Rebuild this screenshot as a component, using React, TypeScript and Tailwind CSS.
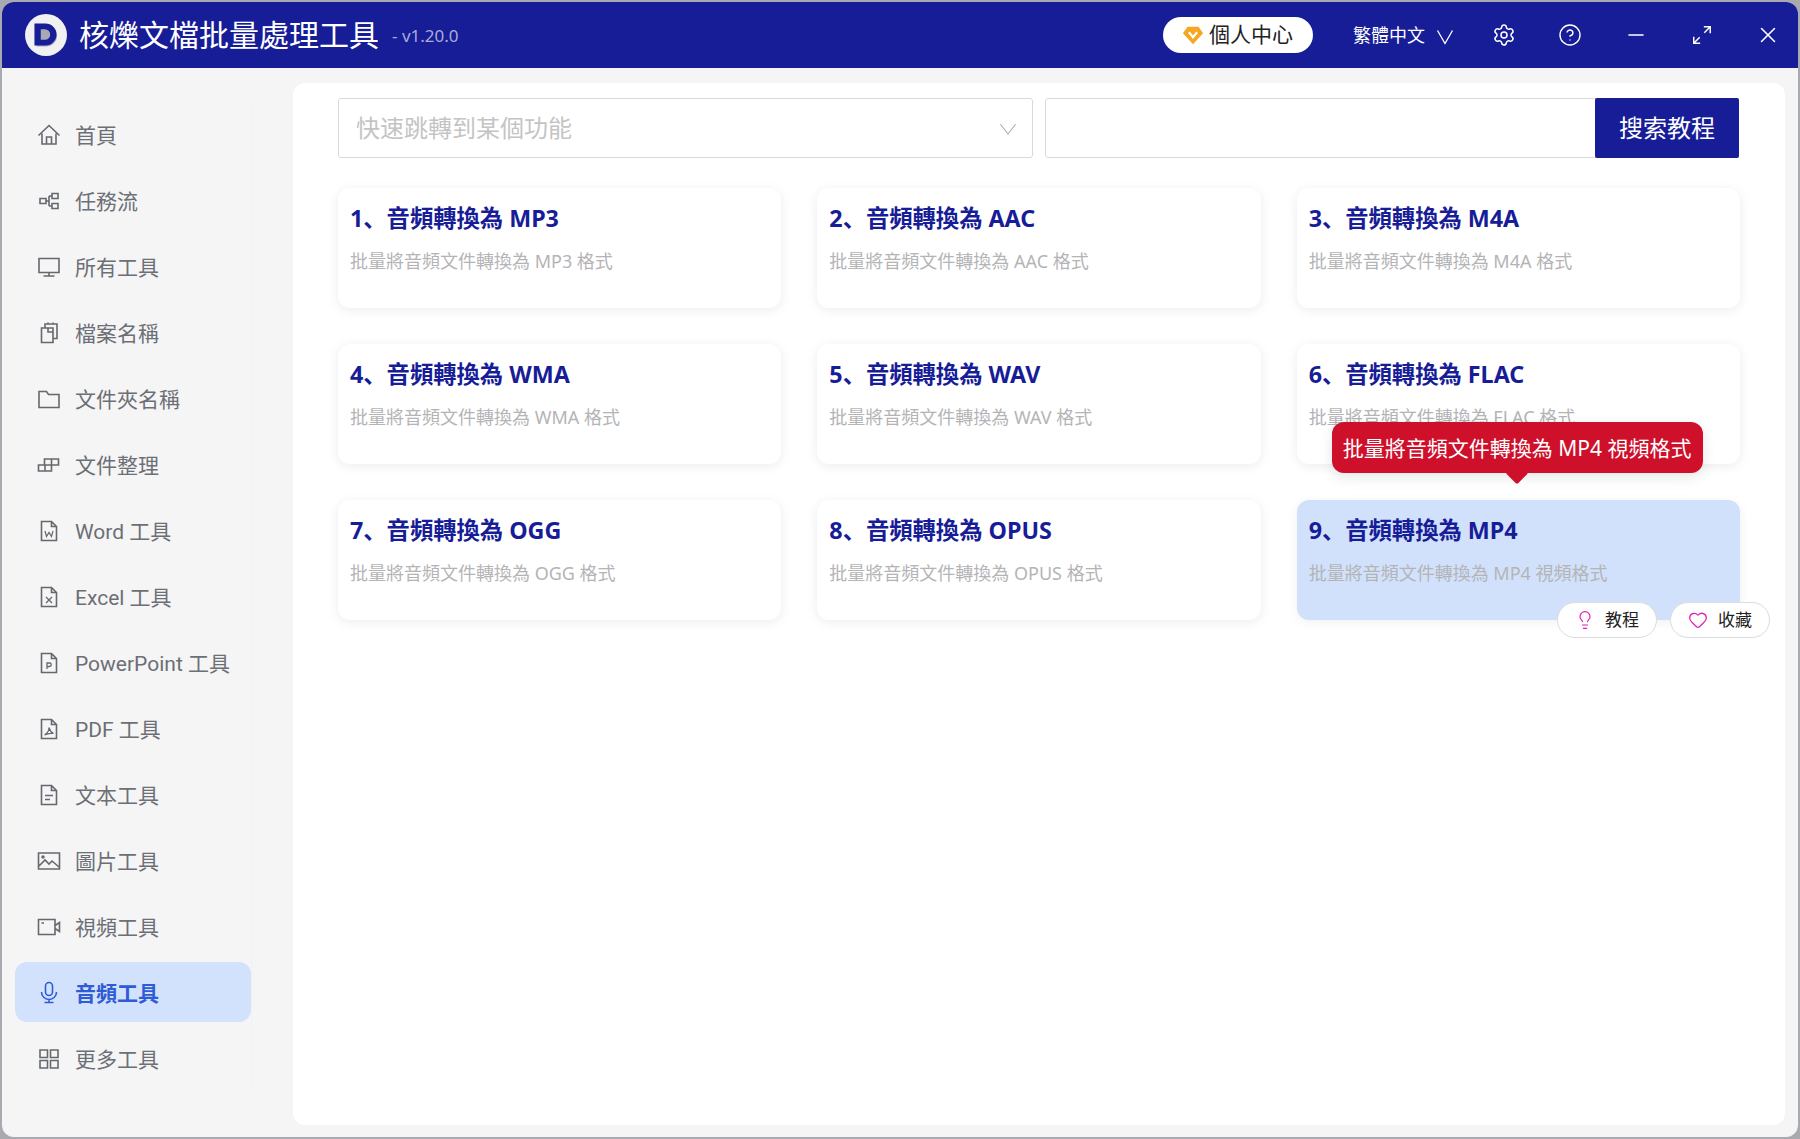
import { CircleHelp, Heart, Lightbulb, Minus, Settings, X } from "lucide-react";
import type { ReactNode } from "react";

function Svg({ children, className = "h-[24px] w-[24px]" }: { children: ReactNode; className?: string }) {
  return (
    <svg viewBox="0 0 24 24" fill="none" stroke="currentColor" strokeWidth="1.6" className={className}>
      {children}
    </svg>
  );
}

const fileOutline = <path d="M4.500 2.500h10l5 5v14h-15z M14.500 2.500v5h5" />;

const navItems: { label: string; icon: ReactNode; active?: boolean }[] = [
  { label: "首頁", icon: <Svg><path d="M1.500 12.500 12 2.500l10.500 10M5 10.500V21h14V10.500M9.500 21v-7h5v7" /></Svg> },
  { label: "任務流", icon: <Svg><path d="M3 9.500h6v5H3zM15 4.500h6v5h-6zM15 14.500h6v5h-6zM9 12h3M12 7h3M12 17h3M12 7v10" /></Svg> },
  { label: "所有工具", icon: <Svg><path d="M2 3.500h20v14H2zM12 17.500v3.500M6.500 21h11" /></Svg> },
  { label: "檔案名稱", icon: <Svg><path d="M4.500 7h11.500v14.500H4.500zM8 7V3h12v14.500h-4M11 1.500V3M16 1.500V3M11 7v4h5" /></Svg> },
  { label: "文件夾名稱", icon: <Svg><path d="M2 4.500h7.500l2 3H22v13H2z" /></Svg> },
  { label: "文件整理", icon: <Svg><path d="M1.500 12h13v6h-13zM7.500 12V6h14v6h-7M8 12v6M14.500 6v6" /></Svg> },
  { label: "Word 工具", icon: <Svg>{fileOutline}<path d="m8 12 1.500 5.500 2.500-4 2.500 4L16 12" strokeWidth="1.200" /></Svg> },
  { label: "Excel 工具", icon: <Svg>{fileOutline}<path d="m9 12 6 6M15 12l-6 6" strokeWidth="1.300" /></Svg> },
  { label: "PowerPoint 工具", icon: <Svg>{fileOutline}<path d="M10 18v-6h2.500a1.700 1.700 0 0 1 0 3.500H10" strokeWidth="1.300" /></Svg> },
  { label: "PDF 工具", icon: <Svg>{fileOutline}<path d="M12 10.500c0 3-2 6-4.500 7.500 3-1.500 6-2 9-1.500-2-1-3.700-3-4.500-6" strokeWidth="1.200" /></Svg> },
  { label: "文本工具", icon: <Svg>{fileOutline}<path d="M8 12.500h8M8 16.500h5" /></Svg> },
  { label: "圖片工具", icon: <Svg><path d="M1.500 4h21v16h-21zM2 17l6-6 4 4 3-3 7 6" /><circle cx="6" cy="8" r="1" /></Svg> },
  { label: "視頻工具", icon: <Svg><path d="M1.500 4.500h16.500v15H1.500zM18 10.500l4.500-3v9l-4.500-3M4.500 8h2.500" /></Svg> },
  {
    label: "音頻工具",
    active: true,
    icon: <Svg><rect x="8.500" y="1.500" width="7" height="13" rx="3.500" /><path d="M4.500 11a7.500 7.500 0 0 0 15 0M12 18.500v3M7.500 21.500h9" /></Svg>,
  },
  { label: "更多工具", icon: <Svg><path d="M3 3h7.500v7.500H3zM13.500 3H21v7.500h-7.500zM3 13.500h7.500V21H3zM13.500 13.500H21V21h-7.500z" /></Svg> },
];

const cards = [
  ["1、音頻轉換為 MP3", "批量將音頻文件轉換為 MP3 格式"],
  ["2、音頻轉換為 AAC", "批量將音頻文件轉換為 AAC 格式"],
  ["3、音頻轉換為 M4A", "批量將音頻文件轉換為 M4A 格式"],
  ["4、音頻轉換為 WMA", "批量將音頻文件轉換為 WMA 格式"],
  ["5、音頻轉換為 WAV", "批量將音頻文件轉換為 WAV 格式"],
  ["6、音頻轉換為 FLAC", "批量將音頻文件轉換為 FLAC 格式"],
  ["7、音頻轉換為 OGG", "批量將音頻文件轉換為 OGG 格式"],
  ["8、音頻轉換為 OPUS", "批量將音頻文件轉換為 OPUS 格式"],
  ["9、音頻轉換為 MP4", "批量將音頻文件轉換為 MP4 視頻格式"],
];

function Header() {
  return (
    <header className="flex h-[66px] items-center bg-[#171d97] text-white">
      <svg viewBox="0 0 40 40" className="ml-[23px] h-[42px] w-[42px] shrink-0">
        <circle cx="20" cy="20" r="20" fill="#f1f1f1" />
        <path d="M10 10h10a10.500 10.500 0 0 1 0 21H11z" fill="#a9a9b5" />
        <path fillRule="evenodd" d="M9 9h10.500a10.500 10.500 0 0 1 0 21H9zM15 14.500v10h4a5 5 0 0 0 0-10z" fill="#171d97" />
      </svg>
      <h1 className="ml-[12px] text-[30px] leading-none whitespace-nowrap">核爍文檔批量處理工具</h1>
      <span className="ml-[13px] mt-[2px] text-[17px] text-[#a9acd8]">- v1.20.0</span>
      <button className="ml-auto flex h-[36px] w-[150px] items-center rounded-full bg-white pl-[19px] text-[21px] text-[#222]">
        <svg viewBox="0 0 24 24" className="mr-[5px] h-[22px] w-[22px]">
          <path d="M6 3h12l5 7-11 12L1 10z" fill="#f5a623" />
          <path d="m7.500 9 4.500 5.500L16.500 9" fill="none" stroke="#fff" strokeWidth="2.400" />
        </svg>
        個人中心
      </button>
      <span className="ml-[40px] text-[18px] whitespace-nowrap">繁體中文</span>
      <Svg className="ml-[8px] h-[24px] w-[24px]">
        <path d="m4.500 7.500 7.500 13 7.500-13" strokeWidth="1.300" />
      </Svg>
      <Settings size={24} strokeWidth={1.5} className="ml-[35px]" />
      <CircleHelp size={24} strokeWidth={1.4} className="ml-[42px]" />
      <Minus size={24} strokeWidth={1.6} className="ml-[42px]" />
      <Svg className="ml-[43px] h-[22px] w-[22px]">
        <path d="M14 3h7v7M21 3l-6.500 6.500M10 21H3v-7M3 21l6.500-6.500" />
      </Svg>
      <X size={26} strokeWidth={1.4} className="ml-[42px] mr-[17px]" />
    </header>
  );
}

function Sidebar() {
  return (
    <aside className="w-[291px] shrink-0 pl-[13px] pt-[36px]">
      <nav className="flex h-[986px] w-[237px] flex-col gap-[6px] border-r border-[#f1f1f1] font-['Roboto','Noto_Sans_CJK_SC',sans-serif]">
        {navItems.map((item) => (
          <a
            key={item.label}
            className={
              item.active
                ? "flex h-[60px] shrink-0 items-center rounded-[12px] bg-[#d2e2fc] pl-[22px] text-[21px] font-bold text-[#2f5bd6]"
                : "flex h-[60px] shrink-0 items-center pl-[22px] text-[21px] text-[#6c6f75]"
            }
          >
            <span className={item.active ? "mr-[14px] pt-[2px] text-[#2f5bd6]" : "mr-[14px] pt-[2px] text-[#65686e]"}>{item.icon}</span>
            <span className="pt-[6px]">{item.label}</span>
          </a>
        ))}
      </nav>
    </aside>
  );
}

function ToolCard({ title, desc, hovered }: { title: string; desc: string; hovered: boolean }) {
  return (
    <div
      className={
        hovered
          ? "relative h-[120px] rounded-[12px] bg-[#d1e1fb] px-[12px] pt-[13px] shadow-[0_2px_12px_rgba(0,0,0,0.06)]"
          : "relative h-[120px] rounded-[12px] bg-white px-[12px] pt-[13px] shadow-[0_2px_12px_rgba(0,0,0,0.08)]"
      }
    >
      <div className="text-[23.300px] leading-[34px] font-bold whitespace-nowrap text-[#171d97]">{title}</div>
      <div className="mt-[13px] text-[18px] leading-[26px] whitespace-nowrap text-[#b4b4b6]">{desc}</div>
      {hovered ? (
        <>
          <div className="absolute left-[35px] top-[-78px] z-10 flex h-[51px] w-[371px] items-center justify-center rounded-[12px] bg-[#cf102b] pt-[2px] text-[21px] whitespace-nowrap text-white shadow-[0_4px_14px_rgba(0,0,0,0.1)]">
            {desc}
            <span className="absolute bottom-[-8px] left-[177px] h-[16px] w-[16px] rotate-45 rounded-[2px] bg-[#cf102b]" />
          </div>
          <div className="absolute right-[-30px] top-[102px] z-10 flex gap-[13px]">
            <button className="flex h-[36px] w-[100px] items-center justify-center gap-[10px] rounded-full border border-[#dcdcdc] bg-white text-[17px] text-[#222]">
              <Lightbulb size={20} strokeWidth={1.4} className="text-[#e01fb0]" />
              教程
            </button>
            <button className="flex h-[36px] w-[100px] items-center justify-center gap-[10px] rounded-full border border-[#dcdcdc] bg-white text-[17px] text-[#222]">
              <Heart size={20} strokeWidth={1.5} className="text-[#e01fb0]" />
              收藏
            </button>
          </div>
        </>
      ) : null}
    </div>
  );
}

export default function App() {
  return (
    <div className="h-[1139px] w-[1800px] overflow-hidden bg-[#a9a9b0] p-[2px] font-['Noto_Sans','Noto_Sans_CJK_SC',sans-serif]">
      <div className="flex h-[1135px] w-[1796px] flex-col overflow-hidden rounded-[12px] bg-[#f5f5f5]">
        <Header />
        <div className="flex flex-1">
          <Sidebar />
          <main className="mt-[15px] h-[1042px] w-[1492px] rounded-[12px] bg-white pl-[45px] pt-[15px]">
            <div className="flex w-[1401px] gap-[12px]">
              <div className="flex h-[60px] w-[695px] items-center justify-between rounded-[3px] border border-[#d9d9d9] pl-[17px] pr-[11px] text-[24px] text-[#c4c4c4]">
                快速跳轉到某個功能
                <Svg className="h-[26px] w-[26px] text-[#a8a8a8]">
                  <path d="m5 8.500 7 9 7-9" strokeWidth="1" />
                </Svg>
              </div>
              <div className="flex h-[60px] flex-1 rounded-[3px] border border-[#d9d9d9]">
                <div className="flex-1" />
                <button className="my-[-1px] mr-[-1px] w-[144px] rounded-[2px] bg-[#171d97] text-[24px] text-white">搜索教程</button>
              </div>
            </div>
            <div className="mt-[30px] grid w-[1402px] grid-cols-3 gap-[36px]">
              {cards.map(([title, desc], i) => (
                <ToolCard key={title} title={title} desc={desc} hovered={i === 8} />
              ))}
            </div>
          </main>
        </div>
      </div>
    </div>
  );
}
